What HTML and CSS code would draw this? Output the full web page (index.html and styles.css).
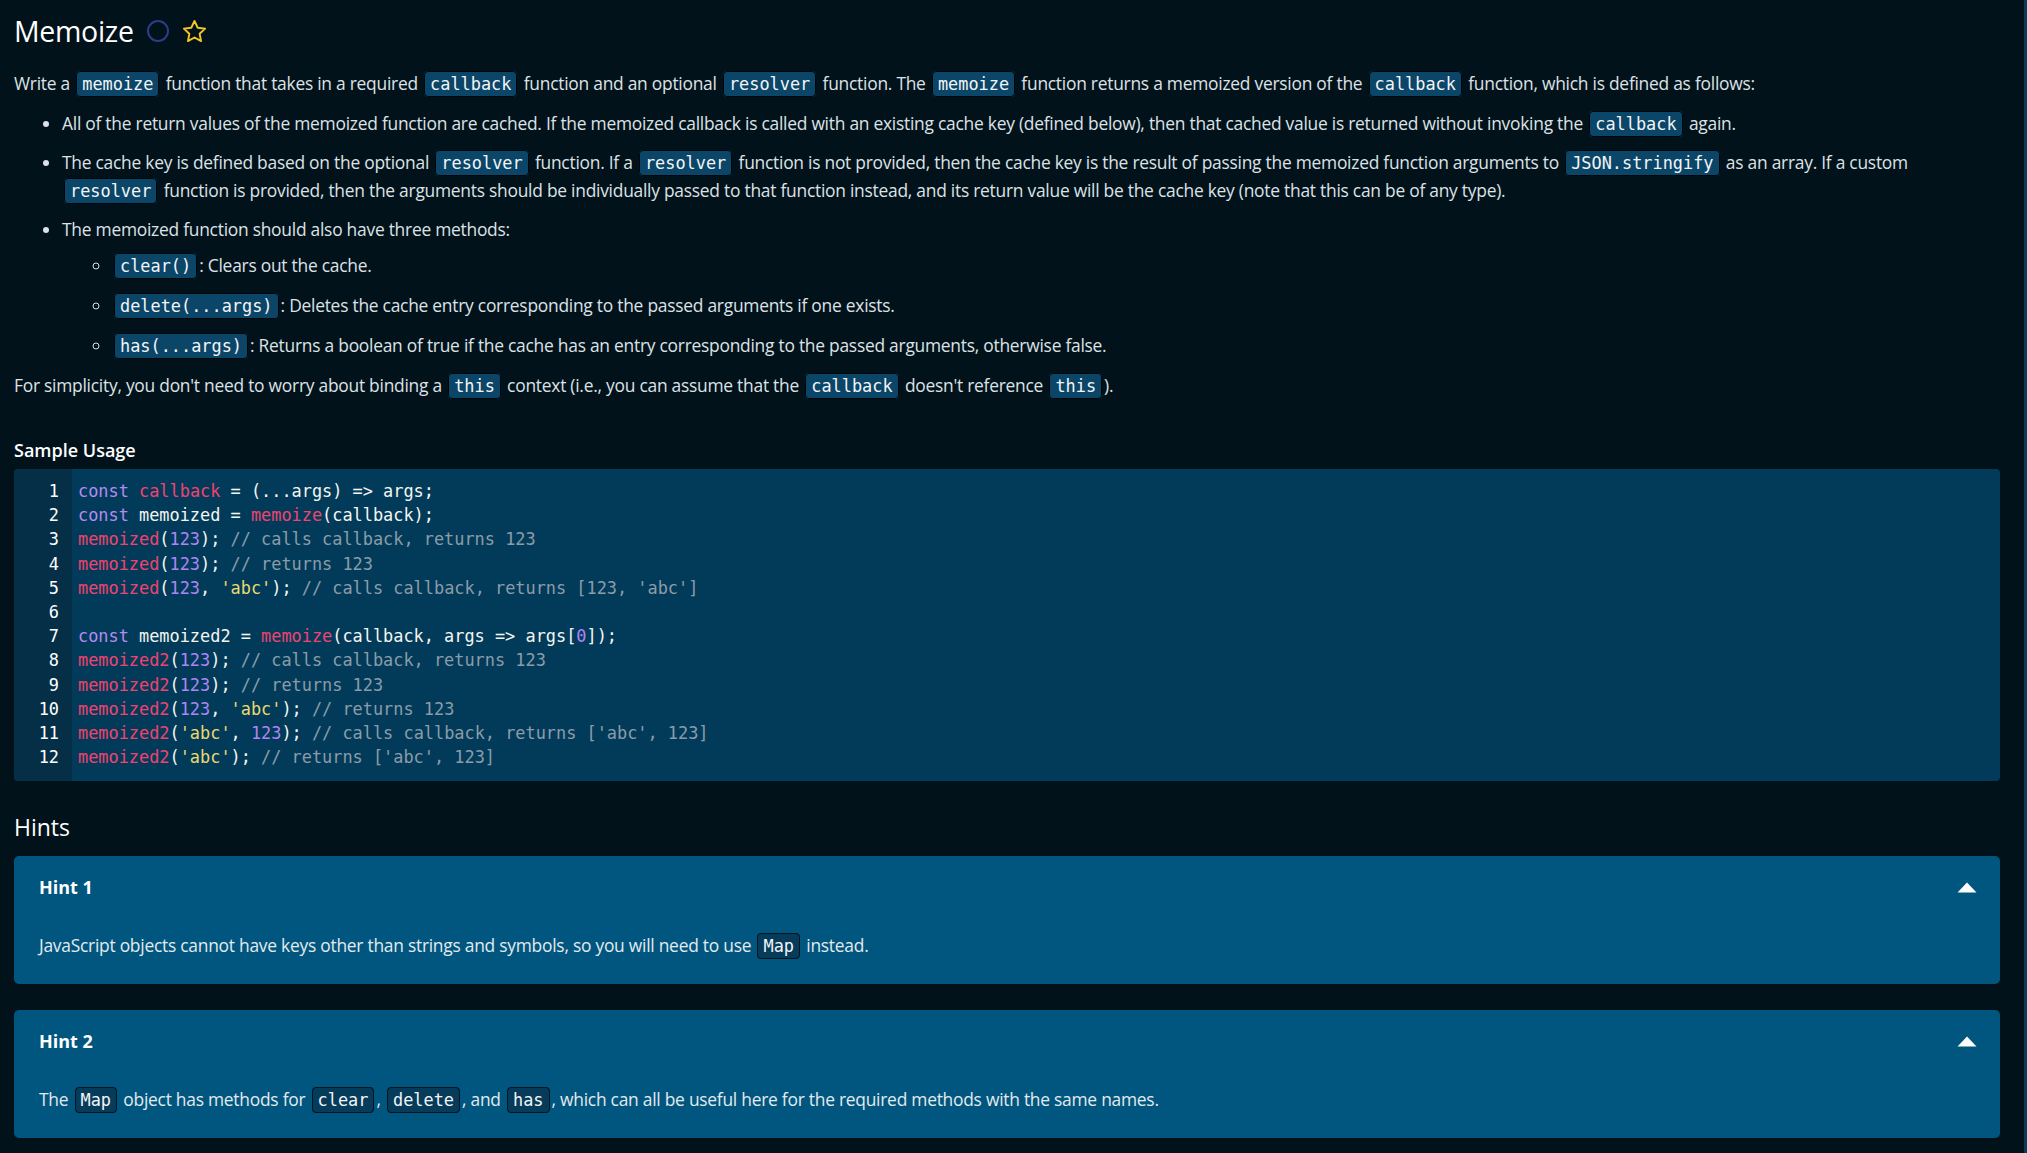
FILE: index.html
```html
<!DOCTYPE html>
<html lang="en">
<head>
<meta charset="utf-8">
<title>Memoize</title>
<link rel="stylesheet" href="styles.css">
</head>
<body>
<main class="page">
  <div class="title-row">
    <h1 class="title">Memoize</h1>
    <svg class="status-icon" width="24" height="24" viewBox="0 0 24 24"><circle cx="12" cy="12" r="10" fill="none" stroke="#2c3c86" stroke-width="2"/></svg>
    <svg class="star-icon" width="27" height="27" viewBox="0 0 24 24"><path d="M12 2.6l2.850 6.05 6.6.8-4.87 4.55 1.25 6.55L12 17.3l-5.83 3.25 1.25-6.55L2.55 9.45l6.6-.8z" fill="none" stroke="#f3c623" stroke-width="1.7" stroke-linejoin="round"/></svg>
  </div>

  <div class="prompt">
    <p>Write a <code>memoize</code> function that takes in a required <code>callback</code> function and an optional <code>resolver</code> function. The <code>memoize</code> function returns a memoized version of the <code>callback</code> function, which is defined as follows:</p>
    <ul class="list">
      <li>All of the return values of the memoized function are cached. If the memoized callback is called with an existing cache key (defined below), then that cached value is returned without invoking the <code>callback</code> again.</li>
      <li>The cache key is defined based on the optional <code>resolver</code> function. If a <code>resolver</code> function is not provided, then the cache key is the result of passing the memoized function arguments to <code>JSON.stringify</code> as an array. If a custom <code>resolver</code> function is provided, then the arguments should be individually passed to that function instead, and its return value will be the cache key (note that this can be of any type).</li>
      <li>The memoized function should also have three methods:
        <ul class="sublist">
          <li><code>clear()</code>: Clears out the cache.</li>
          <li><code>delete(...args)</code>: Deletes the cache entry corresponding to the passed arguments if one exists.</li>
          <li><code>has(...args)</code>: Returns a boolean of true if the cache has an entry corresponding to the passed arguments, otherwise false.</li>
        </ul>
      </li>
    </ul>
    <p>For simplicity, you don't need to worry about binding a <code>this</code> context (i.e., you can assume that the <code>callback</code> doesn't reference <code>this</code>).</p>
  </div>

  <h3 class="section-title">Sample Usage</h3>
  <div class="code-block">
    <div class="gutter"><span>1</span><span>2</span><span>3</span><span>4</span><span>5</span><span>6</span><span>7</span><span>8</span><span>9</span><span>10</span><span>11</span><span>12</span></div>
    <pre class="code"><span class="kw">const</span> <span class="fn">callback</span> = (...args) =&gt; args;
<span class="kw">const</span> memoized = <span class="fn">memoize</span>(callback);
<span class="fn">memoized</span>(<span class="num">123</span>); <span class="cm">// calls callback, returns 123</span>
<span class="fn">memoized</span>(<span class="num">123</span>); <span class="cm">// returns 123</span>
<span class="fn">memoized</span>(<span class="num">123</span>, <span class="str">'abc'</span>); <span class="cm">// calls callback, returns [123, 'abc']</span>

<span class="kw">const</span> memoized2 = <span class="fn">memoize</span>(callback, args =&gt; args[<span class="num">0</span>]);
<span class="fn">memoized2</span>(<span class="num">123</span>); <span class="cm">// calls callback, returns 123</span>
<span class="fn">memoized2</span>(<span class="num">123</span>); <span class="cm">// returns 123</span>
<span class="fn">memoized2</span>(<span class="num">123</span>, <span class="str">'abc'</span>); <span class="cm">// returns 123</span>
<span class="fn">memoized2</span>(<span class="str">'abc'</span>, <span class="num">123</span>); <span class="cm">// calls callback, returns ['abc', 123]</span>
<span class="fn">memoized2</span>(<span class="str">'abc'</span>); <span class="cm">// returns ['abc', 123]</span></pre>
  </div>

  <h2 class="hints-title">Hints</h2>
  <div class="hints">
    <section class="hint">
      <div class="hint-head">
        <span class="hint-name">Hint 1</span>
        <svg class="caret" width="20" height="11" viewBox="0 0 20 11"><path d="M10 0.5L19.5 10.5H0.5z" fill="#ffffff"/></svg>
      </div>
      <p class="hint-text">JavaScript objects cannot have keys other than strings and symbols, so you will need to use <code>Map</code> instead.</p>
    </section>
    <section class="hint">
      <div class="hint-head">
        <span class="hint-name">Hint 2</span>
        <svg class="caret" width="20" height="11" viewBox="0 0 20 11"><path d="M10 0.5L19.5 10.5H0.5z" fill="#ffffff"/></svg>
      </div>
      <p class="hint-text">The <code>Map</code> object has methods for <code>clear</code>, <code>delete</code>, and <code>has</code>, which can all be useful here for the required methods with the same names.</p>
    </section>
  </div>
</main>
</body>
</html>
```

FILE: styles.css
```css
* { box-sizing: border-box; }

html, body {
  margin: 0;
  padding: 0;
  background: #01121b;
}

body {
  min-height: 100vh;
  border-right: 3px solid #0c3b57;
  font-family: "Open Sans", "Noto Sans", sans-serif;
  color: #dde2e6;
  font-size: 17.4px;
  letter-spacing: -0.25px;
  line-height: 28px;
  overflow: hidden;
}

.page {
  padding: 13px 24px 0 14px;
}

.title-row {
  display: flex;
  align-items: center;
  gap: 11px;
  height: 36px;
}

.title {
  margin: 0 1px 0 0;
  font-size: 28.5px;
  line-height: 36px;
  font-weight: 500;
  letter-spacing: -0.3px;
  color: #ffffff;
}

.prompt {
  margin-top: 20px;
}

.prompt p {
  margin: 0;
}

code {
  font-family: "DejaVu Sans Mono", monospace;
  font-size: 16.9px;
  line-height: 1;
  letter-spacing: 0;
  background: #0b4567;
  color: #f2f5f7;
  border: 1px solid #00070c;
  border-radius: 4px;
  padding: 2px 5px;
  margin: 0 2px;
}

.list {
  margin: 12px 0;
  padding-left: 48px;
}

.list li + li {
  margin-top: 11px;
}

.sublist {
  margin: 8px 0 0;
  padding-left: 50px;
  list-style-type: circle;
}

.sublist li + li {
  margin-top: 12px;
}

.section-title {
  margin: 38px 0 6px;
  font-size: 18px;
  line-height: 26px;
  font-weight: 600;
  letter-spacing: 0;
  color: #ffffff;
}

.code-block {
  display: flex;
  background: #023b5a;
  border-radius: 4px;
  overflow: hidden;
}

.gutter {
  display: flex;
  flex-direction: column;
  align-items: flex-end;
  width: 58px;
  padding: 10px 13px 12px 0;
  background: #052f47;
  color: #ffffff;
  font-family: "DejaVu Sans Mono", monospace;
  font-size: 16.9px;
  line-height: 24.2px;
  letter-spacing: 0;
}

.code {
  margin: 0;
  padding: 10px 6px 12px 6px;
  font-family: "DejaVu Sans Mono", monospace;
  font-size: 16.9px;
  line-height: 24.2px;
  letter-spacing: 0;
  color: #f5f5f0;
}

.kw { color: #b38bf0; }
.fn { color: #f0436f; }
.num { color: #b084f5; }
.str { color: #ead96f; }
.cm { color: #8b9ca8; }

.hints-title {
  margin: 31px 0 14px;
  font-size: 23px;
  line-height: 30px;
  font-weight: 500;
  letter-spacing: 0;
  color: #ffffff;
}

.hints {
  display: flex;
  flex-direction: column;
  gap: 26px;
}

.hint {
  background: #00567e;
  border-radius: 5px;
  padding: 18px 23px 25px 25px;
}

.hint-head {
  display: flex;
  align-items: center;
  justify-content: space-between;
  height: 26px;
}

.hint-name {
  font-size: 18px;
  font-weight: 700;
  letter-spacing: 0;
  color: #ffffff;
}

.hint-text {
  margin: 31px 0 0;
  color: #e4eaee;
}

.hint-text code {
  background: #063b5a;
  border-color: #011620;
}
```
